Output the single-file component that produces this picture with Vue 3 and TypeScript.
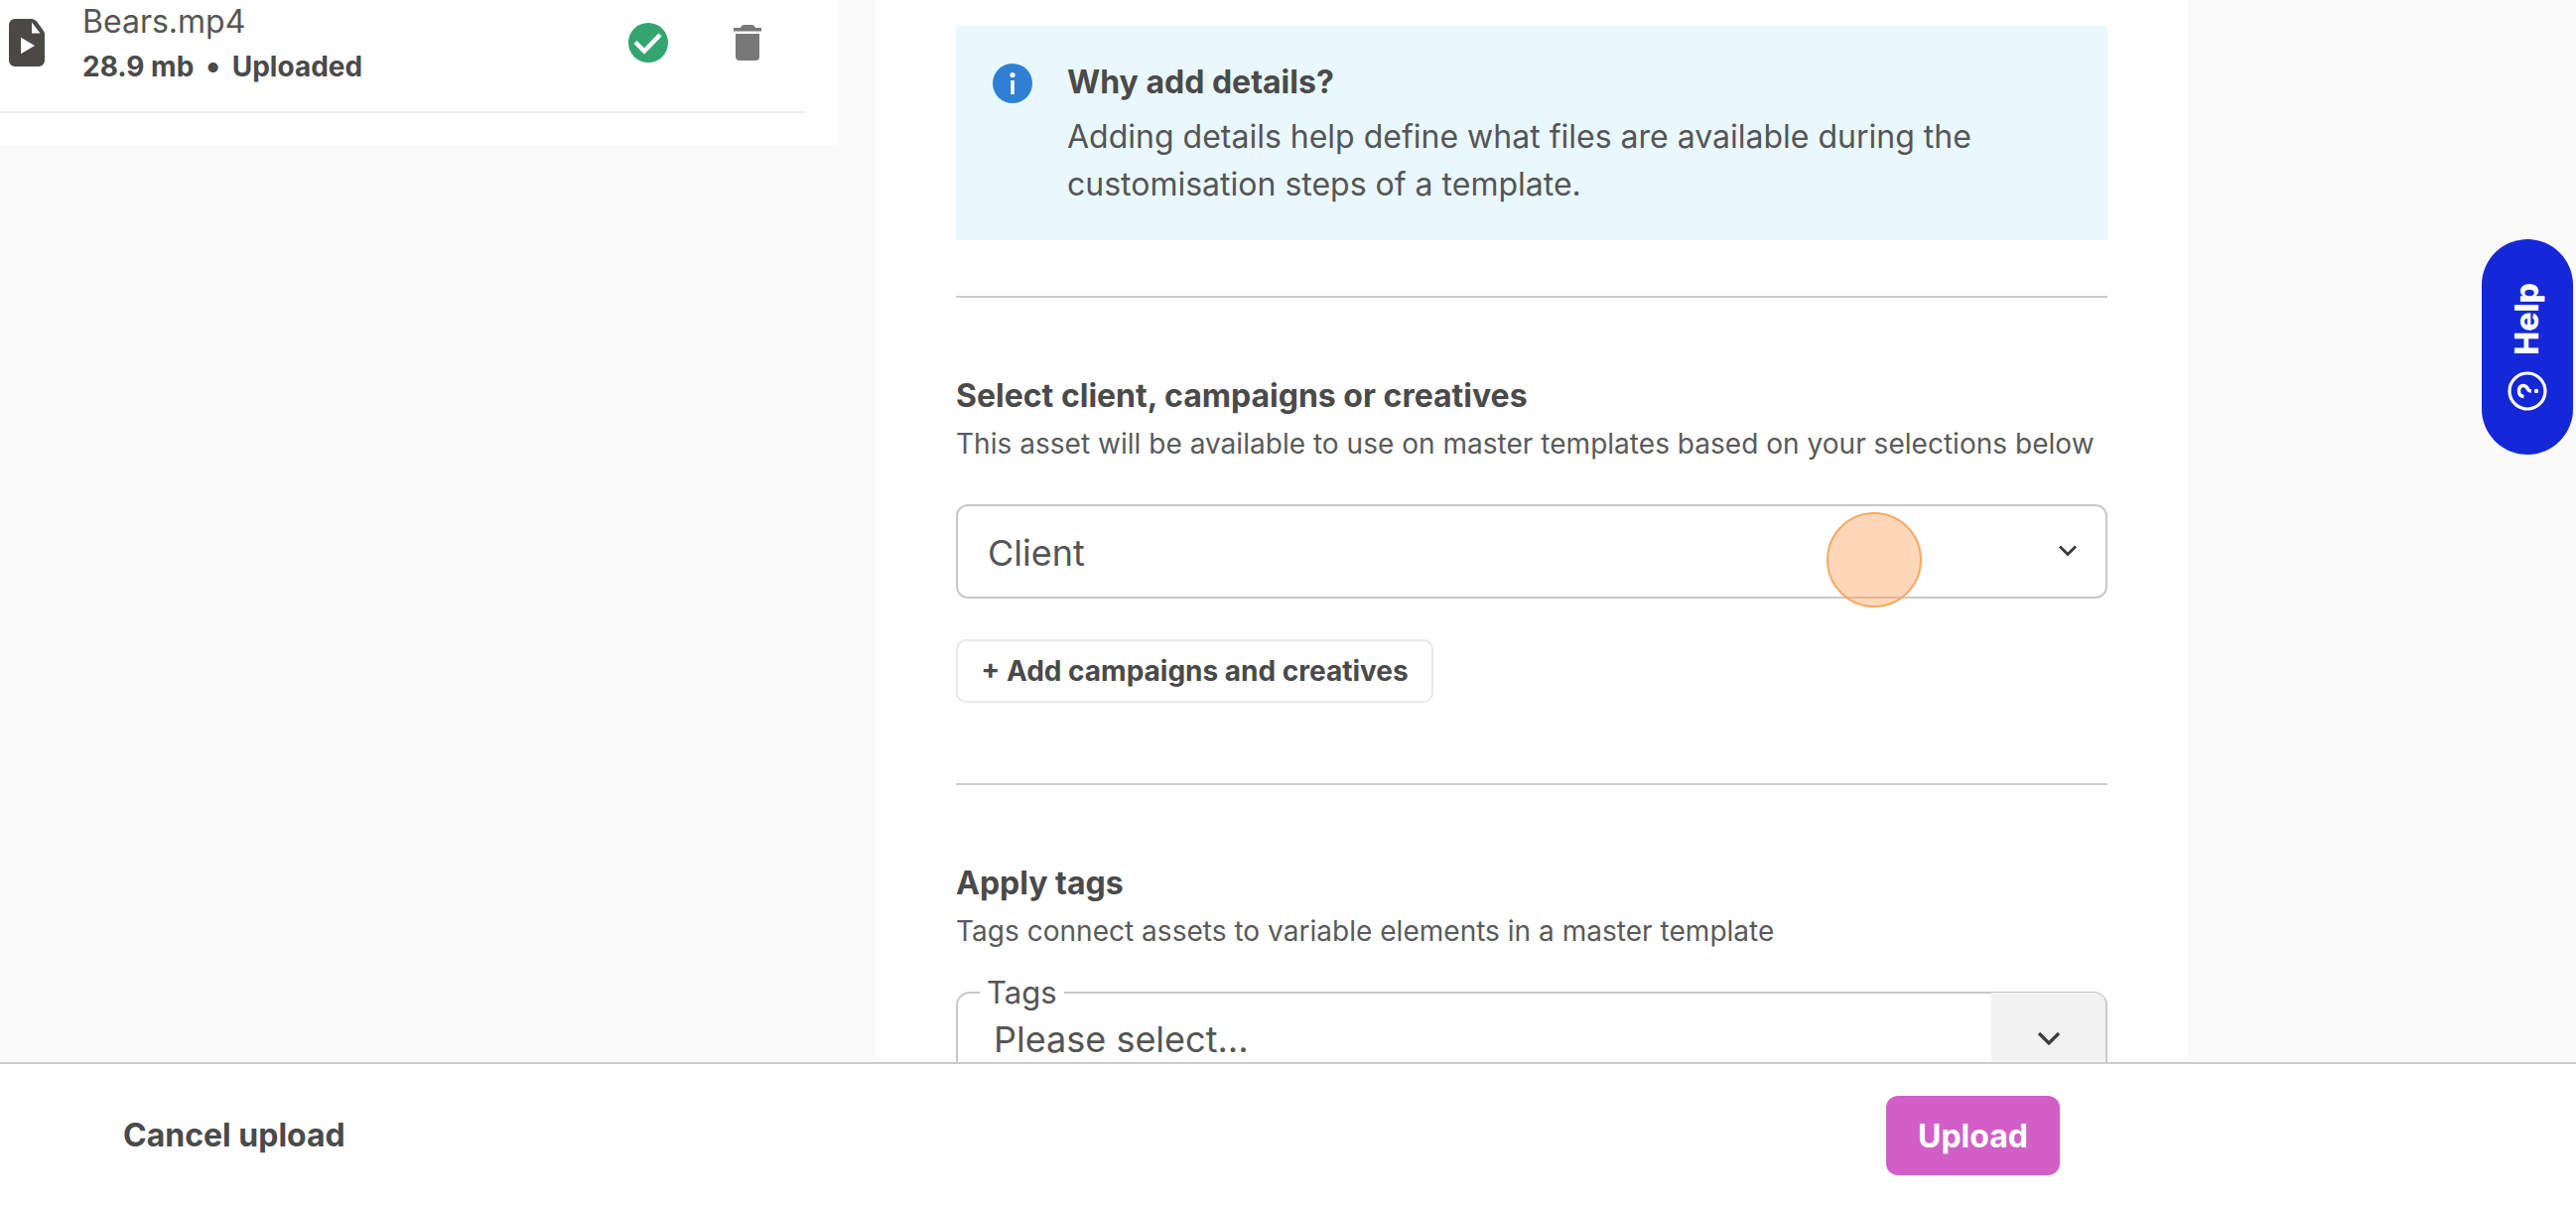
<script setup lang="ts">
const notice = {
  title: 'Why add details?',
  body: 'Adding details help define what files are available during the customisation steps of a template.',
}
</script>

<template>
  <div class="page">
    <main class="main">
      <section class="files">
        <div class="file-row">
          <svg class="file-icon" viewBox="0 0 36 48" width="36" height="48">
            <path fill="#4a4946" d="M6 0H23Q26 0 28 2.500L34.500 11.500Q36 13.500 36 16V42a6 6 0 0 1-6 6H6a6 6 0 0 1-6-6V6a6 6 0 0 1 6-6Z" />
            <path fill="#fff" d="M23 3.500 31.500 14.500H23Z" />
            <path fill="#fff" d="M12 18.700V35.300L26 27Z" />
          </svg>
          <div class="file-text">
            <div class="file-name">Bears.mp4</div>
            <div class="file-meta">28.9 mb <span class="dot">•</span> Uploaded</div>
          </div>
          <svg class="check" viewBox="0 0 40 40" width="40" height="40">
            <circle cx="20" cy="20" r="20" fill="#35a56f" />
            <path d="M7 19.500 16 28.500 32 12" fill="none" stroke="#fff" stroke-width="4.500" />
          </svg>
          <svg class="trash" viewBox="0 0 28 36" width="28" height="36">
            <path fill="#787878" d="M7 3Q8 0 11 0H18Q21 0 22 3H28V6.500H0V3Z" />
            <path fill="#787878" d="M2 9H26V32a4 4 0 0 1-4 4H6a4 4 0 0 1-4-4Z" />
          </svg>
        </div>
      </section>

      <section class="form">
        <div class="notice">
          <svg class="info" viewBox="0 0 40 40" width="40" height="40">
            <circle cx="20" cy="20" r="20" fill="#2f80d2" />
            <circle cx="20" cy="11.500" r="2.600" fill="#fff" />
            <rect x="18.250" y="17" width="3.500" height="14" fill="#fff" />
          </svg>
          <div class="notice-text">
            <div class="notice-title">{{ notice.title }}</div>
            <p class="notice-body">{{ notice.body }}</p>
          </div>
        </div>

        <hr class="rule" />

        <h2 class="heading">Select client, campaigns or creatives</h2>
        <p class="sub">This asset will be available to use on master templates based on your selections below</p>
        <div class="select">
          <span class="select-value">Client</span>
          <svg class="chev" viewBox="0 0 20 12" width="20" height="12">
            <path d="M2 1.500 10 9.500 18 1.500" fill="none" stroke="#3c3c3c" stroke-width="3" />
          </svg>
        </div>
        <button class="add" type="button">+ Add campaigns and creatives</button>

        <hr class="rule rule-wide" />

        <h2 class="heading">Apply tags</h2>
        <p class="sub">Tags connect assets to variable elements in a master template</p>
        <fieldset class="tags">
          <legend>Tags</legend>
          <span class="placeholder">Please select...</span>
          <span class="addon">
            <svg viewBox="0 0 24 14" width="24" height="14">
              <path d="M2 2 12 12 22 2" fill="none" stroke="#3c3c3c" stroke-width="3.200" />
            </svg>
          </span>
        </fieldset>
      </section>
    </main>

    <footer class="footer">
      <button class="cancel" type="button">Cancel upload</button>
      <button class="upload" type="button">Upload</button>
    </footer>

    <div class="help">
      <span class="help-label">Help</span>
      <svg viewBox="0 0 40 40" width="40" height="40">
        <circle cx="20" cy="20" r="18" fill="none" stroke="#fff" stroke-width="3.200" />
        <g transform="rotate(-90 20 20)">
          <path d="M14.500 16.500Q15 11.500 20 11.500 25.500 11.500 25.500 16 25.500 19 22 20.500 20 21.500 20 24" fill="none" stroke="#fff" stroke-width="3.400" />
          <circle cx="20" cy="29" r="2.200" fill="#fff" />
        </g>
      </svg>
    </div>

    <div class="cursor"></div>
  </div>
</template>

<style>
html, body { margin: 0; height: 100%; overflow: hidden; }
</style>

<style scoped>
.page {
  position: relative;
  height: 1216px;
  display: flex;
  flex-direction: column;
  overflow: hidden;
  background: #fafafa;
  color: #4a4a4a;
  font-family: Inter, "Liberation Sans", sans-serif;
}
.main {
  flex: 1;
  min-height: 0;
  display: flex;
  align-items: flex-start;
  overflow: hidden;
}
.files {
  width: 844px;
  height: 146px;
  flex: none;
  background: #fff;
}
.file-row {
  width: 811px;
  height: 114px;
  padding-left: 9px;
  box-sizing: border-box;
  display: flex;
  align-items: flex-start;
  border-bottom: 2px solid #eeeeee;
}
.file-icon { margin-top: 19px; flex: none; }
.file-text { margin-left: 38px; width: 550px; flex: none; }
.file-name { font-size: 32px; line-height: 44px; margin-top: 0; color: #555; }
.file-meta { font-size: 28px; font-weight: 700; line-height: 40px; margin-top: 3px; }
.dot { margin: 0 5px; font-size: 32px; line-height: 1; }
.check { margin-top: 23px; flex: none; }
.trash { margin-top: 25px; margin-left: 66px; flex: none; }
.form {
  width: 1322px;
  margin-left: 38px;
  align-self: stretch;
  flex: none;
  box-sizing: border-box;
  padding: 26px 81px 0;
  background: #fff;
}
.notice {
  height: 216px;
  box-sizing: border-box;
  padding: 38px 37px 0;
  display: flex;
  background: #e9f8ff;
}
.info { flex: none; }
.notice-text { margin-left: 35px; }
.notice-title { font-size: 32px; font-weight: 700; line-height: 40px; margin-top: -1px; }
.notice-body { margin: 11px 0 0; font-size: 32px; line-height: 48px; color: #555; }
.rule { margin: 56px 0 0; height: 2px; border: 0; background: #cccccc; }
.rule-wide { margin-top: 81px; }
.heading { margin: 75px 0 0; font-size: 32px; font-weight: 700; line-height: 48px; }
.sub { margin: 2px 0 0; font-size: 28px; line-height: 44px; letter-spacing: 0.025px; color: #5a5a5a; }
.select {
  margin-top: 39px;
  height: 95px;
  box-sizing: border-box;
  padding: 0 28px 0 30px;
  border: 2px solid #c8c8c8;
  border-radius: 12px;
  background: #fff;
  display: flex;
  align-items: center;
  justify-content: space-between;
  font-size: 36px;
  color: #555;
}
.select-value { padding-top: 3px; }
.chev { margin-top: -1px; }
.add {
  display: block;
  margin-top: 41px;
  width: 481px;
  height: 64px;
  padding: 0;
  border: 2px solid #e8e8e8;
  border-radius: 10px;
  background: #fff;
  color: inherit;
  font: 700 28px Inter, "Liberation Sans", sans-serif;
}
.tags {
  margin: 22px 0 0;
  padding: 0 0 0 36px;
  min-width: 0;
  height: 120px;
  box-sizing: border-box;
  border: 2px solid #c8c8c8;
  border-radius: 14px;
  position: relative;
}
.tags legend {
  margin-left: -14px;
  padding: 0 7px;
  font-size: 31px;
  line-height: 36px;
  color: #555;
}
.placeholder { font-size: 36px; line-height: 48px; display: block; margin-top: 5px; color: #555; }
.addon {
  position: absolute;
  top: -18px;
  right: 0;
  bottom: 0;
  width: 115px;
  background: #f2f2f2;
  border-radius: 0 12px 0 0;
  display: flex;
  justify-content: center;
  padding-top: 39px;
  box-sizing: border-box;
}
.addon svg { display: block; }
.footer {
  height: 146px;
  flex: none;
  box-sizing: border-box;
  border-top: 2px solid #cccccc;
  background: #fff;
  display: flex;
  align-items: center;
  justify-content: space-between;
  padding: 0 520px 0 124px;
  position: relative;
}
.cancel {
  padding: 0 0 2px;
  border: 0;
  background: none;
  color: inherit;
  font: 700 32px Inter, "Liberation Sans", sans-serif;
}
.upload {
  width: 175px;
  height: 80px;
  border: 0;
  border-radius: 12px;
  background: #d25fc8;
  color: #fff;
  font: 700 32px Inter, "Liberation Sans", sans-serif;
}
.help {
  position: absolute;
  left: 2500px;
  top: 241px;
  width: 92px;
  height: 217px;
  border-radius: 46px;
  background: #1428d8;
  color: #fff;
  display: flex;
  flex-direction: column;
  align-items: center;
  box-sizing: border-box;
  padding-top: 44px;
  gap: 16px;
}
.help-label {
  writing-mode: vertical-rl;
  transform: rotate(180deg);
  font-size: 32px;
  font-weight: 800;
  line-height: 40px;
}
.cursor {
  position: absolute;
  left: 1840px;
  top: 516px;
  width: 96px;
  height: 96px;
  box-sizing: border-box;
  border-radius: 50%;
  border: 2px solid #f6a962;
  background: rgba(253, 160, 85, 0.42);
}
</style>
